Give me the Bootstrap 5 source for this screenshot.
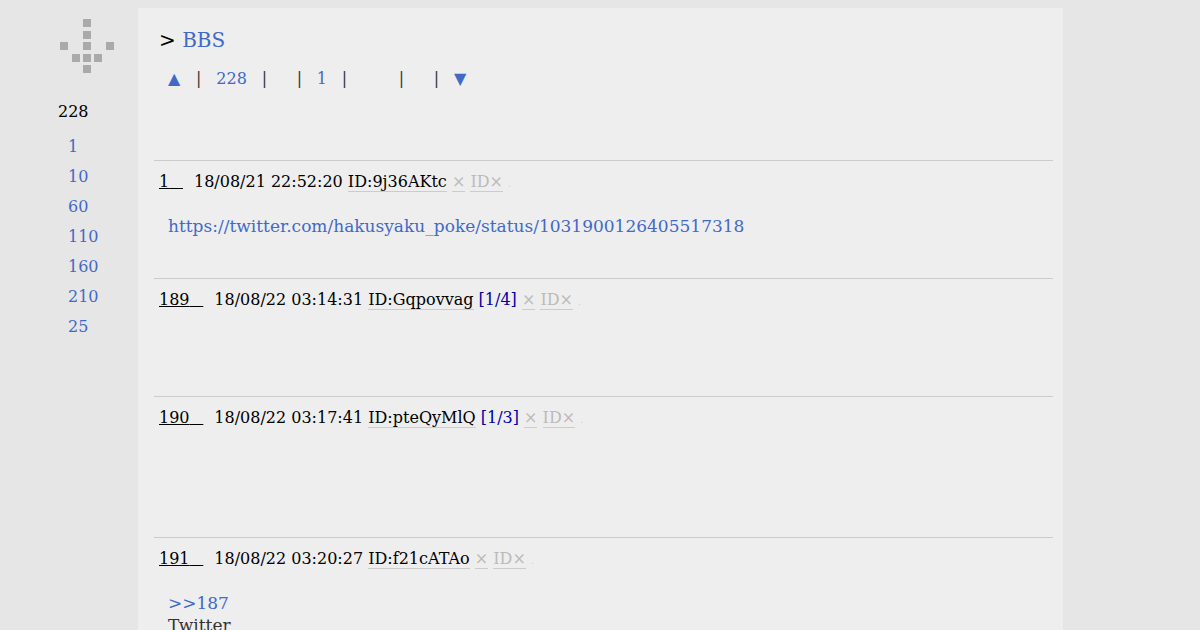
<!DOCTYPE html>
<html lang="ja">
<head>
<meta charset="utf-8">
<title>BBS</title>
<link href="https://cdn.jsdelivr.net/npm/bootstrap@5.3.0/dist/css/bootstrap.min.css" rel="stylesheet">
<style>
html,body{height:630px;overflow:hidden}
body{background:#e6e6e6;font-family:"DejaVu Serif",serif;font-size:16px;line-height:20px;color:#333}
a{color:#4169c8;text-decoration:none}
.side-col{width:138px;flex:none;color:#000}
.side-logo{display:block;margin:19px 0 0 60px}
.side-count{margin:29px 0 0 58px;height:20px}
.side-links{margin:15px 0 0 68px;padding:0;list-style:none}
.side-links li{height:30px;line-height:20px}
.main-panel{width:925px;flex:none;background:#eee;margin-top:8px;padding:0 10px 0 16px;height:622px;overflow:hidden}
.crumb{margin:21px 0 0 5px;font-size:20px;line-height:22px;color:#000}
.pager{margin:18px 0 0 14px;height:22px;line-height:20px;color:#333}
.pager-first{margin-right:1px}
.pager-sep{width:6px;text-align:center;margin:0 14.5px}
.pager-gap{width:22px}
.post-row{border-top:1px solid #ccc;padding:11px 0 0 5px;color:#000}
.post-one{height:118px;margin-top:69px}
.post-two{height:118px}
.post-three{height:141px}
.post-meta{white-space:nowrap;height:20px}
.num-link{color:#000;text-decoration:underline;margin-right:11px}
.num-tail{letter-spacing:-.5px}
.id-link{border-bottom:1px solid #ccc}
.count-link{color:#00a}
.faint{color:#bbb;border-bottom:1px solid #ccc}
.dot{color:#ccc;font-size:9px}
.post-body{margin:23px 0 0 9px;color:#333;font-size:17px;line-height:22px}
.post-body a{display:block}
</style>
</head>
<body>
<div class="d-flex">
  <div class="side-col">
    <svg class="side-logo" width="54" height="54" viewBox="0 0 54 54" fill="#aaa" aria-hidden="true">
      <rect x="23" y="0" width="8" height="8"/><rect x="23" y="12" width="8" height="8"/>
      <rect x="0" y="23" width="8" height="8"/><rect x="23" y="23" width="8" height="8"/><rect x="46" y="23" width="8" height="8"/>
      <rect x="12" y="35" width="8" height="8"/><rect x="23" y="35" width="8" height="8"/><rect x="34" y="35" width="8" height="8"/>
      <rect x="23" y="46" width="8" height="8"/>
    </svg>
    <div class="side-count">228</div>
    <ul class="side-links">
      <li><a href="#">1</a></li><li><a href="#">10</a></li><li><a href="#">60</a></li><li><a href="#">110</a></li><li><a href="#">160</a></li><li><a href="#">210</a></li><li><a href="#">25</a></li>
    </ul>
  </div>
  <main class="main-panel">
    <div class="crumb">&gt; <a href="#">BBS</a></div>
    <div class="pager d-flex">
      <a class="pager-first" href="#">▲</a><span class="pager-sep">|</span>
      <a href="#">228</a><span class="pager-sep">|</span>
      <span class="pager-sep">|</span>
      <a href="#">1</a><span class="pager-sep">|</span>
      <span class="pager-gap"></span>
      <span class="pager-sep">|</span><span class="pager-sep">|</span>
      <a href="#">▼</a>
    </div>
    <div class="post-row post-one">
      <div class="post-meta"><a class="num-link" href="#">1<span class="num-tail">&nbsp;&nbsp;&nbsp;</span></a>18/08/21 22:52:20 <span class="id-link">ID:9j36AKtc</span> <span class="faint">×</span> <span class="faint">ID×</span> <span class="dot">.</span></div>
      <div class="post-body"><a href="#">https://twitter.com/hakusyaku_poke/status/1031900126405517318</a></div>
    </div>
    <div class="post-row post-two">
      <div class="post-meta"><a class="num-link" href="#">189<span class="num-tail">&nbsp;&nbsp;&nbsp;</span></a>18/08/22 03:14:31 <span class="id-link">ID:Gqpovvag</span> <a class="count-link" href="#">[1/4]</a> <span class="faint">×</span> <span class="faint">ID×</span> <span class="dot">.</span></div>
    </div>
    <div class="post-row post-three">
      <div class="post-meta"><a class="num-link" href="#">190<span class="num-tail">&nbsp;&nbsp;&nbsp;</span></a>18/08/22 03:17:41 <span class="id-link">ID:pteQyMlQ</span> <a class="count-link" href="#">[1/3]</a> <span class="faint">×</span> <span class="faint">ID×</span> <span class="dot">.</span></div>
    </div>
    <div class="post-row">
      <div class="post-meta"><a class="num-link" href="#">191<span class="num-tail">&nbsp;&nbsp;&nbsp;</span></a>18/08/22 03:20:27 <span class="id-link">ID:f21cATAo</span> <span class="faint">×</span> <span class="faint">ID×</span> <span class="dot">.</span></div>
      <div class="post-body"><a href="#">&gt;&gt;187</a>Twitter</div>
    </div>
  </main>
</div>
<script src="https://cdn.jsdelivr.net/npm/bootstrap@5.3.0/dist/js/bootstrap.bundle.min.js"></script>
</body>
</html>
